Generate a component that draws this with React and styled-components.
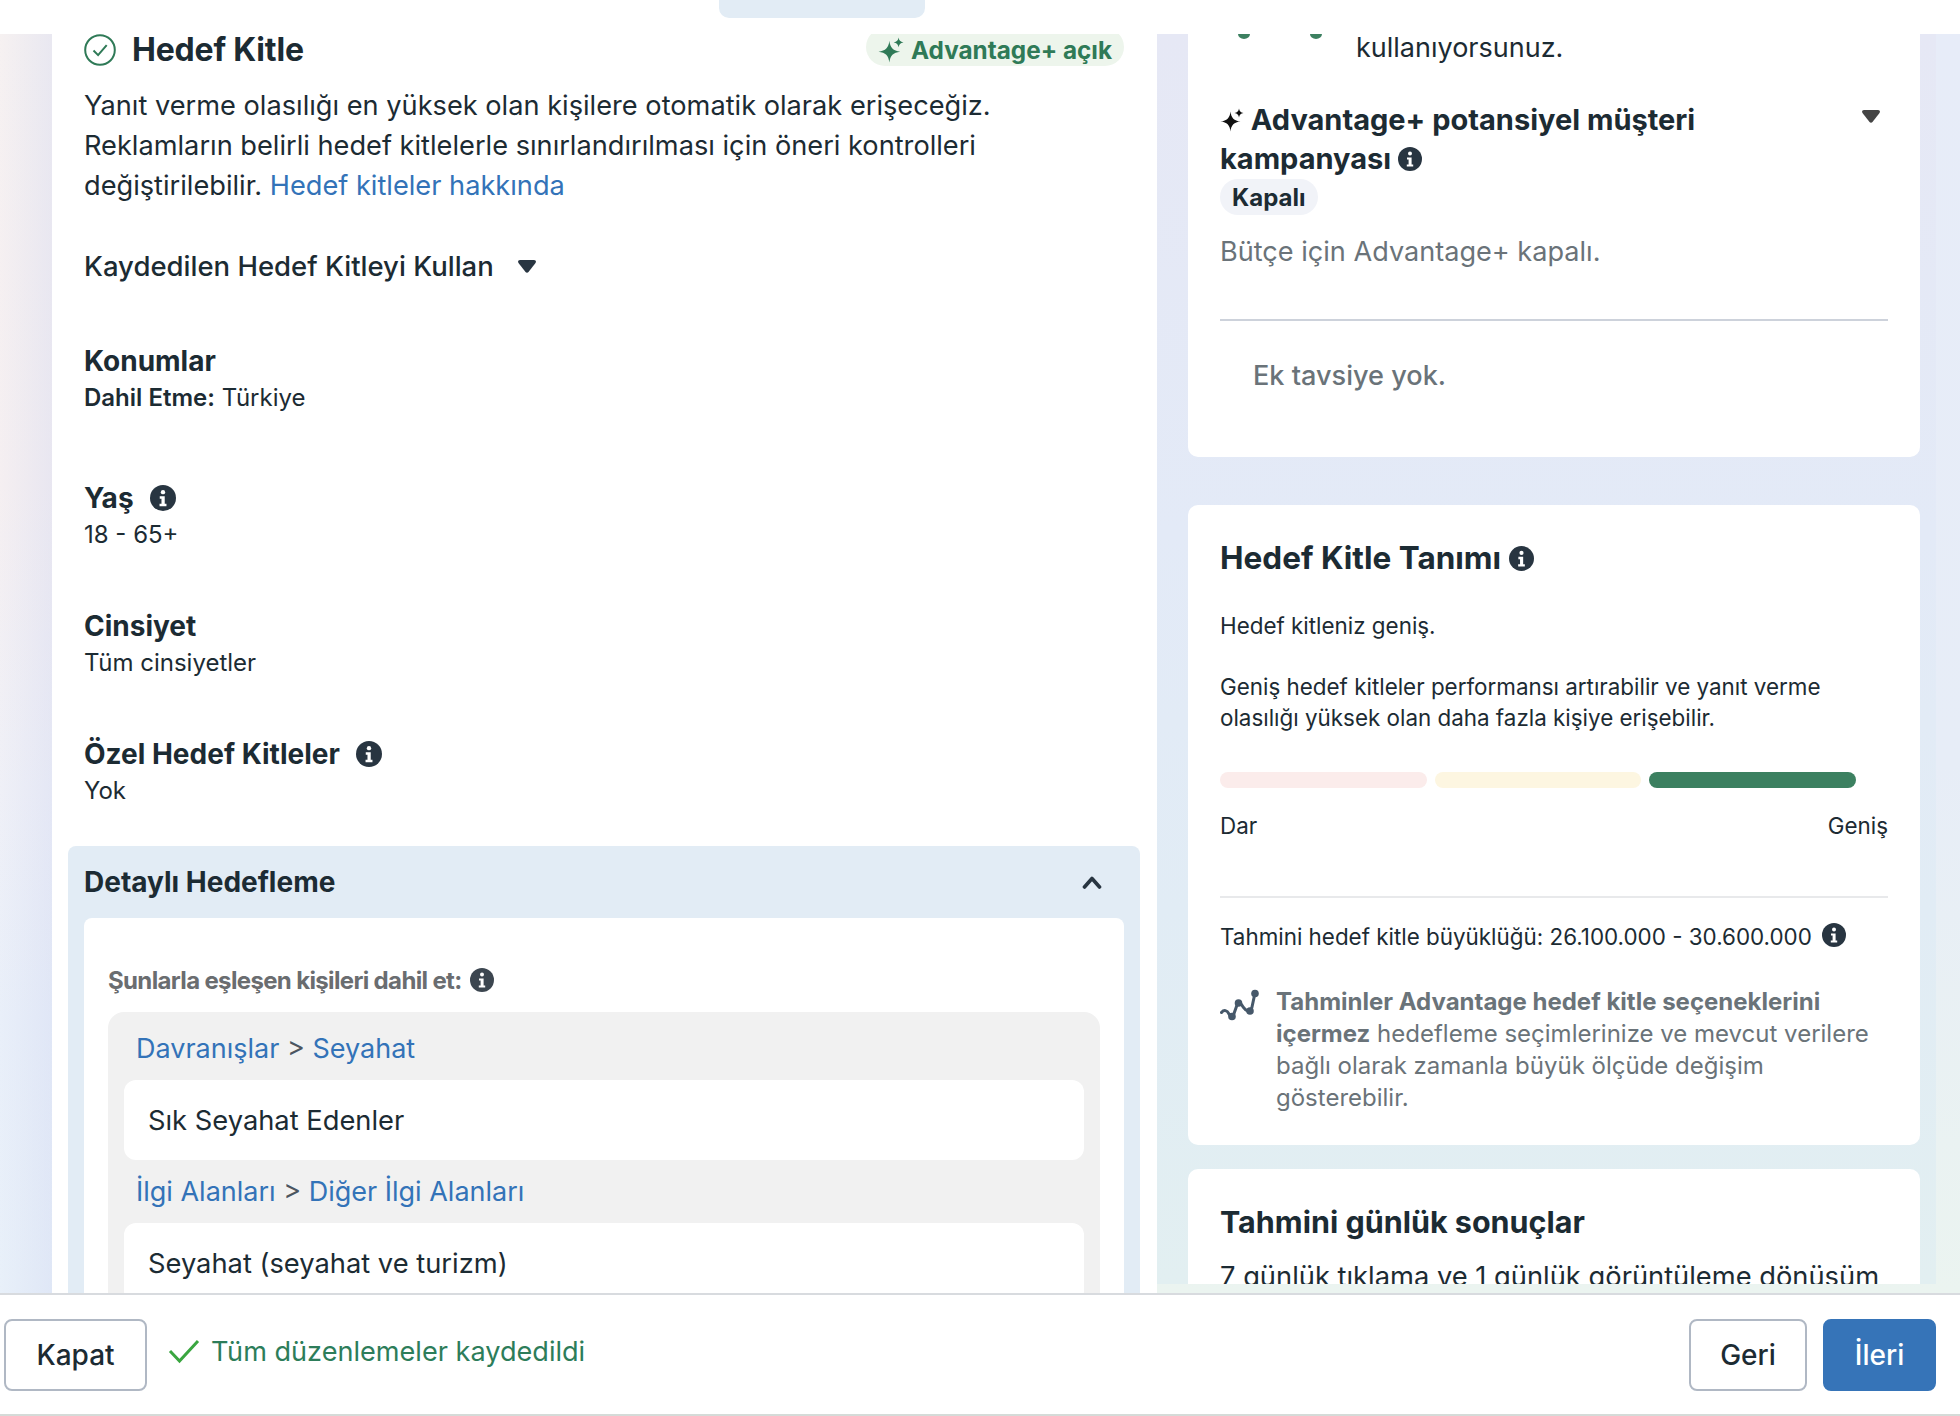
import React from 'react';
import styled, { createGlobalStyle } from 'styled-components';

const GlobalStyle = createGlobalStyle`
  html, body {
    margin: 0;
    padding: 0;
    background: #fff;
  }
  * {
    box-sizing: border-box;
  }
`;

const Page = styled.div`
  width: 1960px;
  height: 1416px;
  display: flex;
  flex-direction: column;
  overflow: hidden;
  font-family: Inter, "Liberation Sans", sans-serif;
  color: #1c2b33;
`;

const TopBar = styled.div`
  height: 34px;
  flex: none;
  background: #fff;
  padding-left: 719px;
`;

const TopTab = styled.div`
  width: 206px;
  height: 18px;
  background: #e2ecf5;
  border-radius: 0 0 10px 10px;
`;

const Workspace = styled.div`
  height: 1259px;
  flex: none;
  display: flex;
  padding: 0 24px 0 52px;
  background:
    linear-gradient(90deg, rgba(205, 212, 240, 0) 0%, rgba(205, 212, 240, 0.32) 100%) no-repeat 0 0 / 52px 100%,
    linear-gradient(180deg, #f6f1f1 0%, #f5eff1 36%, #eff0f7 60%, #e9eff9 78%, #e8f0f9 100%) no-repeat 0 0 / 52px 100%,
    linear-gradient(180deg, #e7ecf8 0%, #e7edf7 58%, #ebf4f0 100%);
`;

const LeftPanel = styled.section`
  width: 1105px;
  flex: none;
  background: #fff;
  overflow: hidden;
  padding: 0 32px;
`;

const RightPane = styled.div`
  width: 779px;
  height: 1250px;
  flex: none;
  overflow: hidden;
  padding: 0 16px 0 31px;
  background: linear-gradient(180deg, #e6e8f5 0%, #e3eaf7 40%, #e1ecf5 70%, #e2eff1 100%);
`;

const Card = styled.section`
  background: #fff;
  border-radius: ${p => (p.$clipped ? '0 0 10px 10px' : '10px')};
  padding: ${p => p.$pad};
  margin-top: ${p => p.$top || 0}px;
`;

const TitleRow = styled.div`
  height: 32px;
  display: flex;
  align-items: center;
  gap: 16px;
`;

const Title = styled.h2`
  margin: 0;
  font-size: 32px;
  line-height: 32px;
  font-weight: 700;
  letter-spacing: -0.2px;
  flex: 1;
`;

const Badge = styled.div`
  height: 38px;
  width: 258px;
  margin: -6px 1px 0 0;
  display: flex;
  align-items: center;
  gap: 7px;
  padding: 5px 0 0 12px;
  border-radius: 19px;
  background: #edf5ec;
  color: #2f7a57;
  font-size: 24.3px;
  font-weight: 700;
  flex: none;
`;

const Intro = styled.p`
  margin: 20px 0 0;
  font-size: 27.2px;
  line-height: 40px;
`;

const Link = styled.a`
  color: #3373b8;
`;

const SavedRow = styled.div`
  margin-top: 42px;
  display: flex;
  align-items: center;
  gap: 24px;
  font-size: 27.5px;
  line-height: 36px;
  font-weight: 500;
`;

const Field = styled.div`
  margin-top: ${p => p.$top}px;
`;

const FieldTitle = styled.div`
  display: flex;
  align-items: center;
  gap: 16px;
  font-size: 28px;
  line-height: 36px;
  font-weight: 700;
`;

const FieldValue = styled.div`
  margin-top: 3px;
  font-size: 24px;
  line-height: 32px;

  b {
    font-weight: 600;
  }
`;

const DetailBox = styled.div`
  margin: 39px -15px 0 -16px;
  padding: 0 16px;
  background: #e2ecf5;
  border-radius: 8px 8px 0 0;
`;

const DetailHeader = styled.div`
  height: 72px;
  display: flex;
  align-items: center;
  justify-content: space-between;
  padding-right: 22px;
  font-size: 28px;
  font-weight: 700;
`;

const DetailBody = styled.div`
  background: #fff;
  border-radius: 8px 8px 0 0;
  padding: 46px 24px 0;
`;

const MatchLabel = styled.div`
  display: flex;
  align-items: center;
  gap: 8px;
  height: 32px;
  font-size: 24px;
  font-weight: 700;
  color: #6a6d70;
  letter-spacing: -0.65px;
`;

const GroupBox = styled.div`
  margin-top: 16px;
  padding: 19px 16px 0;
  background: #f1f1f1;
  border-radius: 16px 16px 0 0;
`;

const Crumb = styled.div`
  padding-left: 12px;
  font-size: 27px;
  line-height: 36px;
  color: #4b5560;
`;

const CrumbLink = styled.span`
  color: #3373b8;
`;

const GroupItem = styled.div`
  height: 80px;
  margin: 13px 0 14px;
  padding-left: 24px;
  display: flex;
  align-items: center;
  background: #fff;
  border-radius: 12px;
  font-size: 27.3px;
`;

const TopLine = styled.div`
  display: flex;
  font-size: 27px;
  line-height: 40px;
`;

const DotRow = styled.div`
  width: 136px;
  flex: none;
  display: flex;
  gap: 60px;
  padding: 6px 0 0 18px;
`;

const Dot = styled.span`
  width: 12px;
  height: 5px;
  background: #3c8060;
  border-radius: 0 0 6px 6px / 0 0 5px 5px;
`;

const AdvantageHead = styled.div`
  margin-top: 32px;
  display: flex;
  justify-content: space-between;
`;

const AdvantageTitle = styled.h3`
  margin: 0;
  width: 560px;
  font-size: 29px;
  line-height: 39px;
  font-weight: 700;

  svg {
    vertical-align: -2px;
  }
`;

const CaretSlot = styled.div`
  margin: 7px 8px 0 0;
`;

const Pill = styled.span`
  display: inline-flex;
  align-items: center;
  height: 36px;
  margin-top: 1px;
  padding: 0 12px;
  border-radius: 18px;
  background: #f1f3f8;
  font-size: 24px;
  font-weight: 700;
`;

const Muted = styled.p`
  margin: ${p => p.$top}px 0 0;
  padding-left: ${p => p.$indent || 0}px;
  font-size: 27.1px;
  line-height: 40px;
  font-weight: ${p => p.$weight || 400};
  color: #6a7379;
`;

const Divider = styled.hr`
  margin: ${p => p.$top}px 0 0;
  border: 0;
  height: 2px;
  background: ${p => p.$color};
`;

const CardTitle = styled.h3`
  margin: 0;
  display: flex;
  align-items: center;
  gap: 8px;
  font-size: ${p => p.$size}px;
  line-height: 40px;
  font-weight: 700;
`;

const Body = styled.p`
  margin: ${p => p.$top}px 0 0;
  font-size: 22.4px;
  line-height: ${p => p.$line || 32}px;
`;

const Meter = styled.div`
  margin-top: 39px;
  width: 636px;
  display: flex;
  gap: 8px;
`;

const MeterBar = styled.div`
  flex: 1;
  height: 16px;
  border-radius: 8px;
  background: ${p => p.$color};
`;

const MeterLabels = styled.div`
  margin-top: 22px;
  display: flex;
  justify-content: space-between;
  font-size: 22.4px;
  line-height: 32px;
`;

const SizeRow = styled.div`
  margin-top: 23px;
  display: flex;
  align-items: center;
  gap: 10px;
  font-size: 22.4px;
  line-height: 32px;

  svg {
    margin-top: -4px;
  }
`;

const Note = styled.div`
  margin-top: 33px;
  display: flex;
  gap: 16px;
  font-size: 24px;
  line-height: 32px;
  color: #6a7379;

  svg {
    flex: none;
    margin-top: 3px;
  }

  b {
    font-weight: 700;
  }
`;

const ResultText = styled.p`
  margin: 15px 0 0;
  font-size: 27.3px;
  line-height: 40px;
  white-space: nowrap;
`;

const Footer = styled.footer`
  height: 123px;
  flex: none;
  display: flex;
  align-items: flex-start;
  padding: 24px 24px 0 4px;
  background: #fff;
  border-top: 2px solid #d8dbdf;
  border-bottom: 2px solid #d5dbd8;
`;

const Button = styled.button`
  height: 72px;
  width: ${p => p.$width}px;
  border-radius: 8px;
  font: 500 28px Inter, "Liberation Sans", sans-serif;
  color: ${p => (p.$primary ? '#fff' : '#1c2b33')};
  background: ${p => (p.$primary ? '#3674b8' : '#fff')};
  border: 2px solid ${p => (p.$primary ? '#3674b8' : '#b0b8c4')};
  margin-left: ${p => p.$left || 0}px;
`;

const Saved = styled.div`
  margin-left: 21px;
  height: 64px;
  flex: 1;
  display: flex;
  align-items: center;
  gap: 11px;
  font-size: 27.1px;
  color: #2d7d5a;
`;

const Info = ({ size = 26, fill = '#283541' }) => (
  <svg width={size} height={size} viewBox="0 0 24 24" style={{ flex: 'none' }}>
    <circle cx="12" cy="12" r="12" fill={fill} />
    <circle cx="12" cy="6.6" r="2" fill="#fff" />
    <path d="M9 10.4h4.6v7h1.6v2.2H8.8v-2.2h1.8v-4.8H9z" fill="#fff" />
  </svg>
);

const Sparkle = ({ size = 24, color = '#2f7a57' }) => (
  <svg width={size} height={size} viewBox="0 0 24 24" style={{ flex: 'none' }}>
    <path d="M10.5 3.5C11.2 10 14 12.8 20.5 13.5 14 14.2 11.2 17 10.5 23.5 9.8 17 7 14.2.5 13.5 7 12.8 9.8 10 10.5 3.5z" fill={color} />
    <path d="M19 .5c.4 2.8 1.6 4 4.5 4.5-2.9.5-4.1 1.7-4.5 4.5-.4-2.8-1.6-4-4.5-4.5 2.9-.5 4.1-1.7 4.5-4.5z" fill={color} />
  </svg>
);

const Caret = ({ color = '#283541' }) => (
  <svg width="18" height="13" viewBox="0 0 18 13">
    <path d="M2 0h14c1.7 0 2.5 1.7 1.500 3l-7 9c-.8.9-2.200.9-3 0l-7-9C-.5 1.700.3 0 2 0z" fill={color} />
  </svg>
);

const ChevronUp = () => (
  <svg width="20" height="14" viewBox="0 0 20 14" fill="none">
    <path d="M2.500 12L10 3.500l7.500 8.500" stroke="#283541" strokeWidth="3.600" strokeLinecap="round" strokeLinejoin="round" />
  </svg>
);

const CheckCircle = () => (
  <svg width="32" height="32" viewBox="0 0 32 32" fill="none">
    <circle cx="16" cy="16" r="14.800" stroke="#2f7a57" strokeWidth="2" />
    <path d="M9.500 16.500l4.600 4.600 8.600-10" stroke="#2f7a57" strokeWidth="2" />
  </svg>
);

const TrendIcon = () => (
  <svg width="40" height="32" viewBox="0 0 40 32" fill="none">
    <path d="M1.500 23.500C4 20.500 7 21 9 25c1.500 3 3.500 4 4.500 1l3.500-10c1-3 2.500-3.500 4.500-.5 2 3.500 5 7 8 6.500 1.500-.3 2-1.500 2.500-4L35 4" stroke="#46586a" strokeWidth="3" strokeLinecap="round" />
    <circle cx="12" cy="27.500" r="3.800" fill="#46586a" />
    <circle cx="18.500" cy="14" r="3.800" fill="#46586a" />
    <circle cx="30" cy="22" r="3.800" fill="#46586a" />
    <circle cx="35" cy="4.500" r="3.800" fill="#46586a" />
  </svg>
);

const SavedCheck = () => (
  <svg width="32" height="26" viewBox="0 0 32 26" fill="none">
    <path d="M2 13l9.500 10L30 3" stroke="#3aa640" strokeWidth="3" />
  </svg>
);

const App = () => {
  return (
    <Page className="Page">
      <GlobalStyle />
      <TopBar className="TopBar">
        <TopTab className="TopTab" />
      </TopBar>

      <Workspace className="Workspace">
        <LeftPanel className="LeftPanel">
          <TitleRow className="TitleRow">
            <CheckCircle />
            <Title className="Title">Hedef Kitle</Title>
            <Badge className="Badge">
              <Sparkle size={26} />
              Advantage+ açık
            </Badge>
          </TitleRow>

          <Intro className="Intro">
            Yanıt verme olasılığı en yüksek olan kişilere otomatik olarak erişeceğiz.
            <br />
            Reklamların belirli hedef kitlelerle sınırlandırılması için öneri kontrolleri
            <br />
            değiştirilebilir. <Link className="Link">Hedef kitleler hakkında</Link>
          </Intro>

          <SavedRow className="SavedRow">
            Kaydedilen Hedef Kitleyi Kullan
            <Caret />
          </SavedRow>

          <Field className="Field" $top={59}>
            <FieldTitle className="FieldTitle">Konumlar</FieldTitle>
            <FieldValue className="FieldValue"><b>Dahil Etme:</b> Türkiye</FieldValue>
          </Field>
          <Field className="Field" $top={66}>
            <FieldTitle className="FieldTitle">Yaş <Info /></FieldTitle>
            <FieldValue className="FieldValue">18 - 65+</FieldValue>
          </Field>
          <Field className="Field" $top={57}>
            <FieldTitle className="FieldTitle">Cinsiyet</FieldTitle>
            <FieldValue className="FieldValue">Tüm cinsiyetler</FieldValue>
          </Field>
          <Field className="Field" $top={57}>
            <FieldTitle className="FieldTitle">Özel Hedef Kitleler <Info /></FieldTitle>
            <FieldValue className="FieldValue">Yok</FieldValue>
          </Field>

          <DetailBox className="DetailBox">
            <DetailHeader className="DetailHeader">
              Detaylı Hedefleme
              <ChevronUp />
            </DetailHeader>
            <DetailBody className="DetailBody">
              <MatchLabel className="MatchLabel">
                Şunlarla eşleşen kişileri dahil et: <Info size={24} fill="#3c4650" />
              </MatchLabel>
              <GroupBox className="GroupBox">
                <Crumb className="Crumb">
                  <CrumbLink className="CrumbLink">Davranışlar</CrumbLink> &gt; <CrumbLink className="CrumbLink">Seyahat</CrumbLink>
                </Crumb>
                <GroupItem className="GroupItem">Sık Seyahat Edenler</GroupItem>
                <Crumb className="Crumb">
                  <CrumbLink className="CrumbLink">İlgi Alanları</CrumbLink> &gt; <CrumbLink className="CrumbLink">Diğer İlgi Alanları</CrumbLink>
                </Crumb>
                <GroupItem className="GroupItem">Seyahat (seyahat ve turizm)</GroupItem>
              </GroupBox>
            </DetailBody>
          </DetailBox>
        </LeftPanel>

        <RightPane className="RightPane">
          <Card className="Card" $clipped $pad="0 32px 61px" $top={-6}>
            <TopLine className="TopLine">
              <DotRow className="DotRow">
                <Dot />
                <Dot />
              </DotRow>
              kullanıyorsunuz.
            </TopLine>
            <AdvantageHead className="AdvantageHead">
              <AdvantageTitle className="AdvantageTitle">
                <Sparkle size={24} color="#111" /> Advantage+ potansiyel müşteri kampanyası <Info size={24} />
              </AdvantageTitle>
              <CaretSlot className="CaretSlot">
                <Caret color="#444" />
              </CaretSlot>
            </AdvantageHead>
            <Pill className="Pill">Kapalı</Pill>
            <Muted className="Muted" $top={17}>Bütçe için Advantage+ kapalı.</Muted>
            <Divider className="Divider" $top={47} $color="#cdd2db" />
            <Muted className="Muted" $top={35} $indent={33} $weight={500}>Ek tavsiye yok.</Muted>
          </Card>

          <Card className="Card" $pad="33px 32px 31px" $top={48}>
            <CardTitle className="CardTitle" $size={31.5}>Hedef Kitle Tanımı <Info size={25} /></CardTitle>
            <Body className="Body" $top={32}>Hedef kitleniz geniş.</Body>
            <Body className="Body" $top={29} $line={31}>
              Geniş hedef kitleler performansı artırabilir ve yanıt verme olasılığı yüksek olan daha fazla kişiye erişebilir.
            </Body>
            <Meter className="Meter">
              <MeterBar $color="#fbeceb" />
              <MeterBar $color="#fdf6e1" />
              <MeterBar $color="#3c8060" />
            </Meter>
            <MeterLabels className="MeterLabels">
              <span>Dar</span>
              <span>Geniş</span>
            </MeterLabels>
            <Divider className="Divider" $top={54} $color="#e8e9eb" />
            <SizeRow className="SizeRow">
              Tahmini hedef kitle büyüklüğü: 26.100.000 - 30.600.000 <Info size={24} />
            </SizeRow>
            <Note className="Note">
              <TrendIcon />
              <div>
                <b>Tahminler Advantage hedef kitle seçeneklerini içermez</b> hedefleme seçimlerinize ve mevcut verilere bağlı olarak zamanla büyük ölçüde değişim gösterebilir.
              </div>
            </Note>
          </Card>

          <Card className="Card" $pad="33px 32px 40px" $top={24}>
            <CardTitle className="CardTitle" $size={30.5}>Tahmini günlük sonuçlar</CardTitle>
            <ResultText className="ResultText">7 günlük tıklama ve 1 günlük görüntüleme dönüşüm</ResultText>
          </Card>
        </RightPane>
      </Workspace>

      <Footer className="Footer">
        <Button className="Button" $width={143}>Kapat</Button>
        <Saved className="Saved">
          <SavedCheck />
          Tüm düzenlemeler kaydedildi
        </Saved>
        <Button className="Button" $width={118}>Geri</Button>
        <Button className="Button" $width={113} $left={16} $primary>İleri</Button>
      </Footer>
    </Page>
  );
};

export default App;
